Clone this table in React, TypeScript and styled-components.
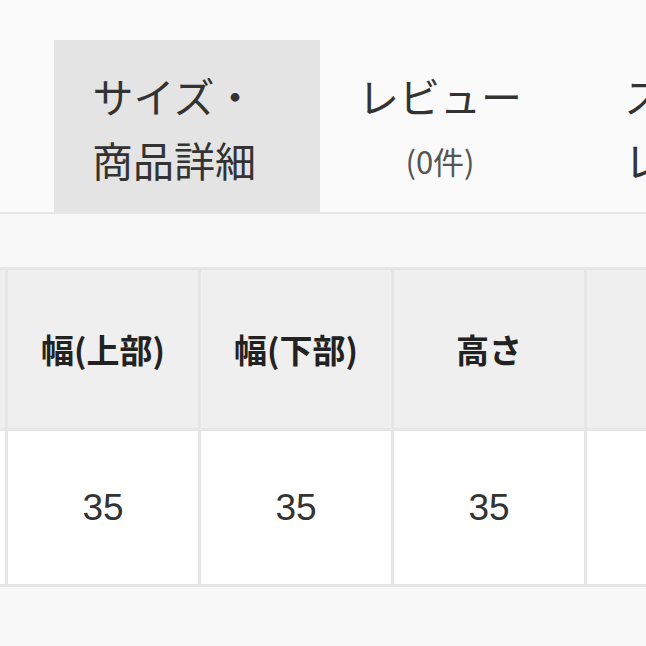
import React from "react"
import styled, { createGlobalStyle } from "styled-components"

const GlobalStyle = createGlobalStyle`
    html, body {
        margin: 0;
        padding: 0;
        background: #f8f8f8;
    }
    body {
        font-family: "Noto Sans CJK JP", "Noto Sans", sans-serif;
        color: #333;
    }
`

const Page = styled.div`
    width: 646px;
    height: 646px;
    overflow: hidden;
    background: #f8f8f8;
`

const TabBar = styled.div`
    display: flex;
    padding: 40px 0 0 54px;
    border-bottom: 2px solid #e6e6e6;
    background: #fafafa;
`

const Tab = styled.div<{ $active?: boolean }>`
    flex-shrink: 0;
    width: 266px;
    height: 172px;
    box-sizing: border-box;
    padding: 23px 0 0 38px;
    background: ${(p) => (p.$active ? "#e4e4e4" : "transparent")};
    display: flex;
    flex-direction: column;
    align-items: flex-start;
`

const TabText = styled.div`
    display: flex;
    flex-direction: column;
    align-items: center;
`

const TabLine = styled.div`
    font-size: 41px;
    line-height: 64px;
    color: #333;
    white-space: nowrap;
`

const TabCount = styled.div`
    font-size: 31px;
    line-height: 40px;
    margin-top: 14px;
    color: #555;
`

const TableClip = styled.div`
    margin-top: 53px;
    overflow: hidden;
`

const SizeGrid = styled.div`
    display: grid;
    grid-template-columns: repeat(5, 190px);
    grid-template-rows: 158px 153px;
    gap: 3px;
    padding: 3px;
    margin-left: -188px;
    width: max-content;
    background: #e6e6e6;
`

const Cell = styled.div<{ $head?: boolean }>`
    display: flex;
    align-items: center;
    justify-content: center;
    background: ${(p) => (p.$head ? "#efefef" : "#ffffff")};
    color: ${(p) => (p.$head ? "#222" : "#333")};
    font-family: ${(p) =>
        p.$head ? `"Noto Sans CJK JP", sans-serif` : `"Liberation Sans", Arial, sans-serif`};
    font-size: ${(p) => (p.$head ? "33px" : "37px")};
    font-weight: ${(p) => (p.$head ? 700 : 400)};
    white-space: nowrap;
`

const columns = [
    { label: "サイズ", value: "F" },
    { label: "幅(上部)", value: "35" },
    { label: "幅(下部)", value: "35" },
    { label: "高さ", value: "35" },
    { label: "マチ", value: "12" },
]

export default function App() {
    return (
        <Page>
            <GlobalStyle />
            <TabBar>
                <Tab $active>
                    <TabText>
                        <TabLine>サイズ・</TabLine>
                        <TabLine>商品詳細</TabLine>
                    </TabText>
                </Tab>
                <Tab>
                    <TabText>
                        <TabLine>レビュー</TabLine>
                        <TabCount>(0件)</TabCount>
                    </TabText>
                </Tab>
                <Tab>
                    <TabText>
                        <TabLine>スタッフ</TabLine>
                        <TabLine>レビュー</TabLine>
                    </TabText>
                </Tab>
            </TabBar>
            <TableClip>
                <SizeGrid>
                    {columns.map((c) => (
                        <Cell key={"h" + c.label} $head>
                            {c.label}
                        </Cell>
                    ))}
                    {columns.map((c) => (
                        <Cell key={"v" + c.label}>{c.value}</Cell>
                    ))}
                </SizeGrid>
            </TableClip>
        </Page>
    )
}
